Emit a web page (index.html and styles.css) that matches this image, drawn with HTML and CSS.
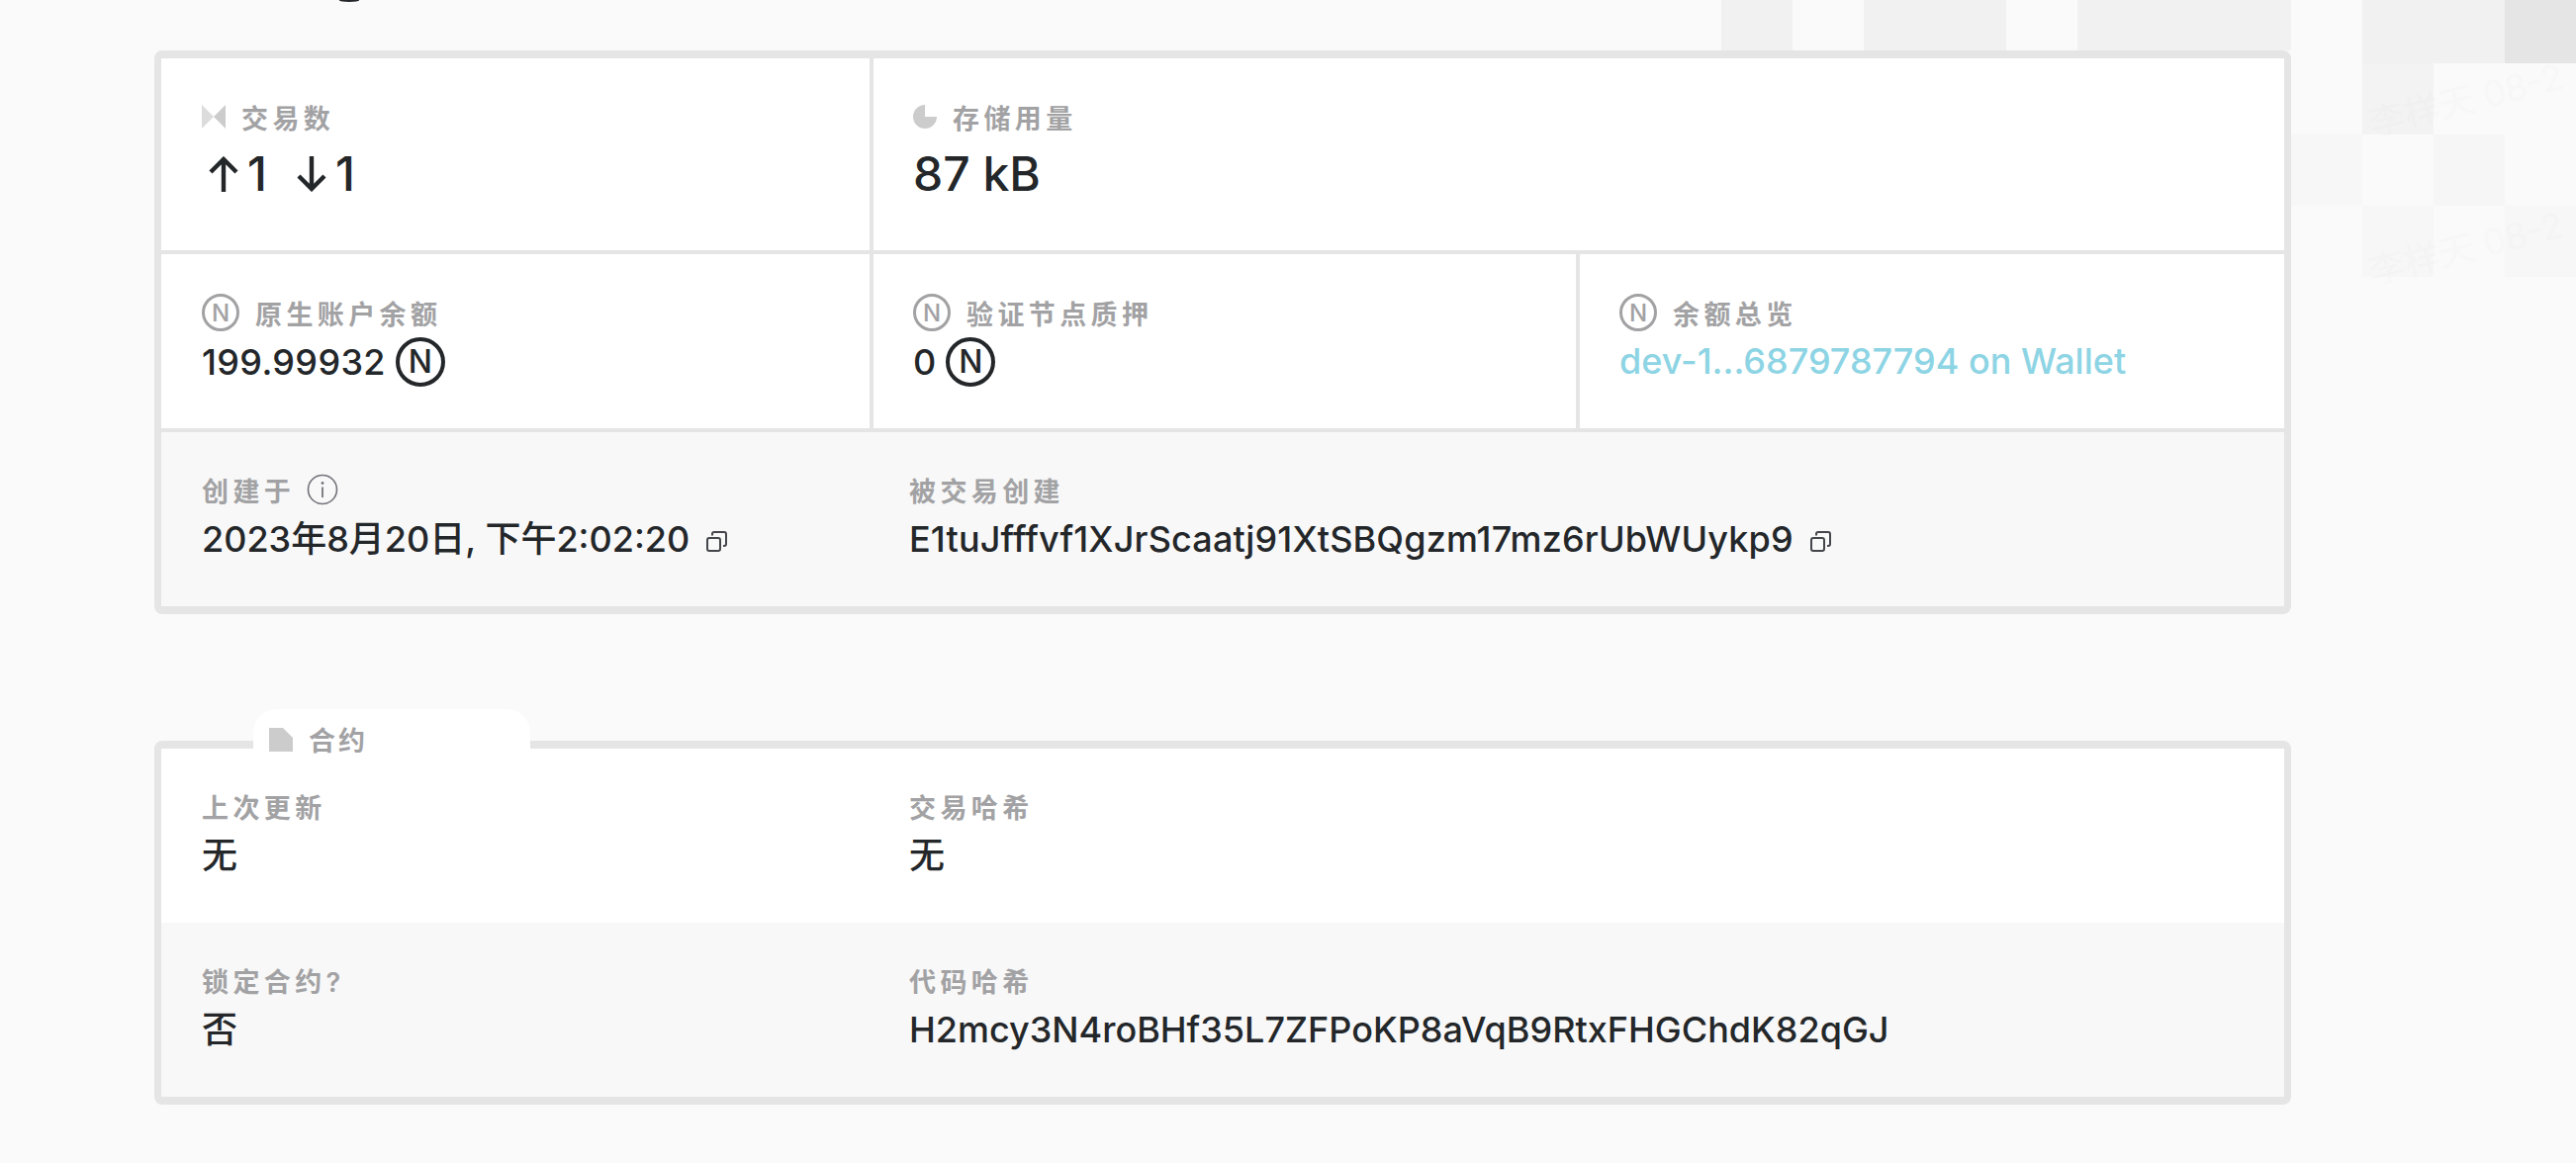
FILE: index.html
```html
<!DOCTYPE html>
<html lang="zh">
<head>
<meta charset="utf-8">
<title>Account</title>
<link rel="stylesheet" href="styles.css">
</head>
<body>
<div class="mosaic" aria-hidden="true">
  <i class="c w1 b"></i><i class="c w1 a"></i><i class="c w2 b"></i><i class="c w1 a"></i><i class="c w3 b"></i>
</div>
<div class="mosaic2" aria-hidden="true">
  <i class="a"></i><i class="b"></i><i class="b"></i><i class="k"></i>
  <i class="a"></i><i class="t3"></i><i class="a"></i><i class="a"></i>
  <i class="t7"></i><i class="a"></i><i class="t6"></i><i class="a"></i>
  <i class="a"></i><i class="t7"></i><i class="a"></i><i class="t7"></i>
</div>
<span class="wm wm1">李样天 08-2</span>
<span class="wm wm2">李样天 08-2</span>
<div class="stub" aria-hidden="true"></div>
<main class="page">
  <section class="card">
    <div class="row r1">
      <div class="cell w-a">
        <div class="label">
          <svg class="ic" width="24" height="24" viewBox="0 0 24 24"><path class="f1" d="M0 0l12 12L0 24z"/><path class="f2" d="M24 0L12 12l12 12z"/></svg>
          <span>交易数</span>
        </div>
        <div class="big"><span class="arr"><svg width="30" height="36" viewBox="0 0 30 36"><path d="M15 36V3M2 16L15 3l13 13" fill="none" stroke="#24272a" stroke-width="4.4"/></svg></span>1<span class="arr arr2"><svg width="30" height="36" viewBox="0 0 30 36"><path d="M15 0v33M2 20l13 13 13-13" fill="none" stroke="#24272a" stroke-width="4.4"/></svg></span>1</div>
      </div>
      <div class="cell grow">
        <div class="label">
          <svg class="ic" width="24" height="24" viewBox="0 0 24 24"><path class="f2" d="M12 0v12h12A12 12 0 1 1 12 0z"/></svg>
          <span>存储用量</span>
        </div>
        <div class="big">87 kB</div>
      </div>
    </div>
    <div class="row r2">
      <div class="cell w-a">
        <div class="label"><span class="n-s">N</span><span>原生账户余额</span></div>
        <div class="val"><span class="amt">199.99932</span><span class="n-b">N</span></div>
      </div>
      <div class="cell w-b">
        <div class="label"><span class="n-s">N</span><span>验证节点质押</span></div>
        <div class="val"><span>0</span><span class="n-b">N</span></div>
      </div>
      <div class="cell grow">
        <div class="label"><span class="n-s">N</span><span>余额总览</span></div>
        <div class="val"><a class="link">dev-1...6879787794 on Wallet</a></div>
      </div>
    </div>
    <div class="row r3 tint">
      <div class="plain col-a">
        <div class="label"><span>创建于</span>
          <svg class="info" width="32" height="32" viewBox="0 0 32 32"><circle cx="16" cy="16" r="14.5" fill="none" stroke="#72727a" stroke-width="1.6"/><path d="M16 13.5V24" stroke="#72727a" stroke-width="1.8"/><circle cx="16" cy="9.5" r="1.4" fill="#72727a"/></svg>
        </div>
        <div class="val"><span>2023年8月20日, 下午2:02:20</span>
          <svg class="copy" width="21" height="21" viewBox="0 0 21 21"><rect x="1" y="7" width="13" height="13" rx="2" fill="none" stroke="#45464b" stroke-width="2"/><path d="M6 4.500V3a2 2 0 0 1 2-2h10a2 2 0 0 1 2 2v10a2 2 0 0 1-2 2h-1" fill="none" stroke="#45464b" stroke-width="2"/></svg>
        </div>
      </div>
      <div class="plain">
        <div class="label"><span>被交易创建</span></div>
        <div class="val"><span class="hash">E1tuJfffvf1XJrScaatj91XtSBQgzm17mz6rUbWUykp9</span>
          <svg class="copy" width="21" height="21" viewBox="0 0 21 21"><rect x="1" y="7" width="13" height="13" rx="2" fill="none" stroke="#45464b" stroke-width="2"/><path d="M6 4.500V3a2 2 0 0 1 2-2h10a2 2 0 0 1 2 2v10a2 2 0 0 1-2 2h-1" fill="none" stroke="#45464b" stroke-width="2"/></svg>
        </div>
      </div>
    </div>
  </section>

  <section class="card card2">
    <div class="tab">
      <svg width="24" height="24" viewBox="0 0 24 24"><path class="f2" d="M0 0h14l10 10v14H0z"/></svg>
      <span>合约</span>
    </div>
    <div class="row r4">
      <div class="plain col-a">
        <div class="label"><span>上次更新</span></div>
        <div class="val"><span>无</span></div>
      </div>
      <div class="plain">
        <div class="label"><span>交易哈希</span></div>
        <div class="val"><span>无</span></div>
      </div>
    </div>
    <div class="row r4 tint">
      <div class="plain col-a">
        <div class="label"><span>锁定合约?</span></div>
        <div class="val"><span>否</span></div>
      </div>
      <div class="plain">
        <div class="label"><span>代码哈希</span></div>
        <div class="val"><span>H2mcy3N4roBHf35L7ZFPoKP8aVqB9RtxFHGChdK82qGJ</span></div>
      </div>
    </div>
  </section>
</main>
</body>
</html>
```
FILE: styles.css
```css
* { box-sizing: border-box; }
html, body { height: 100%; }
body {
  margin: 0;
  background: #fafafa;
  color: #24272a;
  font-family: Inter, "Noto Sans CJK SC", sans-serif;
  overflow: hidden;
  position: relative;
}
.mosaic, .mosaic2 { position: absolute; }
.mosaic { left: 1740px; top: 0; height: 51px; display: flex; }
.mosaic .c { display: block; height: 100%; }
.w1 { width: 72px; }
.w2 { width: 144px; }
.w3 { width: 216px; }
.a { background: #fafafa; }
.b { background: #f1f1f1; }
.t3 { background: #f3f3f3; }
.t6 { background: #f6f6f6; }
.t7 { background: #f7f7f7; }
.k { background: #e5e5e5; }
.mosaic2 {
  left: 2316px; top: 0;
  display: grid;
  grid-template-columns: repeat(4, 72px);
  grid-template-rows: 64px;
  grid-auto-rows: 72px;
}
.mosaic2 i { display: block; }
.wm {
  position: absolute;
  left: 2392px;
  font-size: 36px;
  color: #000;
  opacity: .006;
  white-space: nowrap;
  transform: rotate(-14deg);
}
.wm1 { top: 72px; }
.wm2 { top: 222px; }
.stub {
  position: absolute;
  left: 343px;
  top: -1px;
  width: 20px;
  height: 3px;
  background: #24272a;
  border-radius: 0 0 50% 50%;
}
.page {
  position: relative;
  width: 2160px;
  margin-left: 156px;
  padding-top: 51px;
}
.card {
  border: 8px solid #e5e5e5;
  border-left-width: 7px;
  border-right-width: 7px;
  border-radius: 8px;
  background: #e5e5e5;
}
.card2 {
  position: relative;
  margin-top: 128px;
}
.row { display: flex; }
.r1 { height: 194px; gap: 4px; margin-bottom: 4px; }
.r2 { height: 176px; gap: 4px; margin-bottom: 4px; }
.r3 { height: 176px; }
.r4 { height: 176px; background: #fff; }
.tint, .r4.tint { background: #f8f8f8; }
.cell {
  background: #fff;
  padding: 43px 40px 0;
}
.plain { padding: 42px 42px 0; flex: 1; }
.col-a { flex: 0 0 714px; padding-left: 41px; }
.w-a { flex: 0 0 716px; padding-left: 41px; }
.w-b { flex: 0 0 710px; }
.grow { flex: 1; }
.label {
  display: flex;
  align-items: center;
  gap: 16px;
  height: 32px;
  font-size: 27px;
  font-weight: 600;
  letter-spacing: 4.4px;
  color: #a2a2a4;
}
.ic { flex: none; }
.f1 { fill: #dcdcdc; }
.f2 { fill: #cccccc; }
.big {
  display: flex;
  align-items: center;
  margin-top: 14px;
  font-size: 48px;
  line-height: 56px;
  font-weight: 500;
}
.arr { display: flex; margin: 0 9px 0 7px; }
.arr2 { margin-left: 30px; }
.val {
  display: flex;
  align-items: center;
  gap: 17px;
  margin-top: 10px;
  font-size: 36px;
  line-height: 48px;
  font-weight: 500;
}
.r2 .val { gap: 10px; margin-top: 9px; }
.amt { letter-spacing: .35px; }
.hash { letter-spacing: .15px; }
.link { color: #8dd4e4; }
.n-s, .n-b {
  display: flex;
  flex: none;
  align-items: center;
  justify-content: center;
  border-radius: 50%;
  font-weight: 500;
  letter-spacing: 0;
}
.n-s {
  width: 38px; height: 38px;
  border: 3px solid #a2a2a4;
  font-size: 24px;
}
.n-b {
  width: 50px; height: 50px;
  border: 4px solid #24272a;
  font-size: 32px;
}
.info { margin-left: -4px; }
.copy { flex: none; margin-top: 4px; }
.tab {
  position: absolute;
  left: 93px;
  top: -40px;
  width: 280px;
  height: 60px;
  display: flex;
  align-items: flex-start;
  gap: 16px;
  padding: 19px 0 0 16px;
  background: #fff;
  border-radius: 24px 24px 0 0;
  font-size: 27px;
  line-height: 28px;
  font-weight: 600;
  letter-spacing: 3px;
  color: #a2a2a4;
}
```
